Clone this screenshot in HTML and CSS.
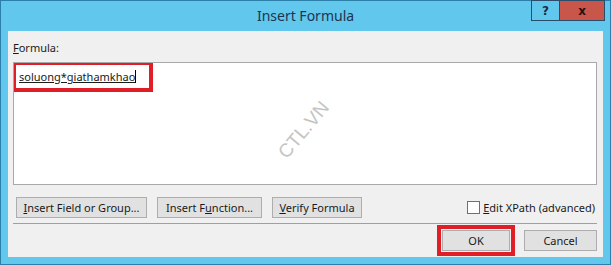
FILE: index.html
```html
<!DOCTYPE html>
<html>

<head>
  <meta charset="UTF-8" />
  <title>Insert Formula</title>
  <link rel="stylesheet" href="styles.css">
</head>

<body>
  <div class="window">
    <div class="titlebar">
      <span class="title">Insert Formula</span>
      <div class="caption-buttons">
        <button class="cap-button help">?</button>
        <button class="cap-button close">x</button>
      </div>
    </div>

    <div class="client">
      <div class="field-label"><u>F</u>ormula:</div>

      <div class="formula-box">
        <div class="formula-mark">
          <span class="formula-text">soluong*giathamkhao</span><span class="caret"></span>
        </div>
        <span class="watermark">CTL.VN</span>
      </div>

      <div class="tool-row">
        <button class="dlg-button field-btn"><u>I</u>nsert Field or Group...</button>
        <button class="dlg-button func-btn">Insert F<u>u</u>nction...</button>
        <button class="dlg-button verify-btn"><u>V</u>erify Formula</button>
        <label class="xpath">
          <span class="checkbox"></span>
          <span><u>E</u>dit XPath (advanced)</span>
        </label>
      </div>

      <hr class="separator">

      <div class="action-row">
        <div class="ok-mark">
          <button class="dlg-button ok">OK</button>
        </div>
        <button class="dlg-button cancel">Cancel</button>
      </div>
    </div>
  </div>
</body>

</html>
```

FILE: styles.css
```css
/* Reset */
* {
  margin: 0;
  padding: 0;
  box-sizing: border-box;
}

body {
  width: 611px;
  height: 265px;
  overflow: hidden;
  font-family: "Noto Sans", "Open Sans", sans-serif;
  font-size: 11px;
  color: #1a1a1a;
}

/* Window frame */
.window {
  display: flex;
  flex-direction: column;
  width: 611px;
  height: 265px;
  background-color: #62c7ec;
  border: 1px solid #2b7fa8;
  padding: 0 7px 7px 7px;
}

.titlebar {
  position: relative;
  height: 30px;
  display: flex;
  justify-content: center;
  align-items: center;
}

.title {
  font-size: 14px;
  color: #1c3550;
  margin-top: -2px;
}

.caption-buttons {
  position: absolute;
  top: -1px;
  right: -2px;
  display: flex;
}

.cap-button {
  height: 21px;
  border: 1px solid #2a4d6b;
  font-family: "DejaVu Sans", sans-serif;
  font-weight: bold;
  font-size: 12px;
  color: #1b2c44;
  cursor: pointer;
}

.cap-button.help {
  width: 28px;
  background-color: #62c7ec;
  border-right: none;
}

.cap-button.close {
  width: 46px;
  background-color: #c9564a;
  color: #2a1010;
}

/* Dialog body */
.client {
  flex: 1;
  display: flex;
  flex-direction: column;
  background-color: #f0f0f0;
  padding: 8px 6px 0 5px;
}

.field-label {
  height: 23px;
  padding-top: 1px;
}

.formula-box {
  position: relative;
  height: 123px;
  background-color: white;
  border: 1px solid #a9a9a9;
  overflow: hidden;
}

.formula-mark {
  position: absolute;
  top: -2px;
  left: -2px;
  width: 141px;
  height: 31px;
  border: 4px solid #e01e27;
  padding: 4px 0 0 3px;
}

.formula-text {
  text-decoration: underline;
}

.caret {
  display: inline-block;
  width: 1px;
  height: 13px;
  background-color: black;
  vertical-align: -2px;
}

.watermark {
  position: absolute;
  left: 256px;
  top: 56px;
  font-family: "Liberation Sans", sans-serif;
  font-size: 19px;
  color: #c4c4c4;
  transform: rotate(-50deg);
}

/* Buttons */
.tool-row {
  display: flex;
  align-items: center;
  gap: 10px;
  margin-top: 12px;
  padding-left: 3px;
}

.dlg-button {
  height: 21px;
  padding: 0 5px;
  background-color: #e1e1e1;
  border: 1px solid #adadad;
  font-family: "Noto Sans", "Open Sans", sans-serif;
  font-size: 11px;
  color: #1a1a1a;
  cursor: pointer;
}

.field-btn {
  width: 131px;
}

.func-btn {
  width: 105px;
}

.verify-btn {
  width: 90px;
}

.xpath {
  margin-left: auto;
  display: flex;
  align-items: center;
  gap: 3px;
  padding-right: 2px;
}

.checkbox {
  width: 13px;
  height: 13px;
  background-color: white;
  border: 1px solid #707070;
}

.separator {
  border: none;
  border-top: 1px solid #a0a0a0;
  margin: 5px 0 0 0;
}

.action-row {
  display: flex;
  justify-content: flex-end;
  align-items: center;
  gap: 9px;
  margin-top: 1px;
}

.ok-mark {
  border: 4px solid #e01e27;
  padding: 1px;
}

.ok {
  width: 68px;
}

.cancel {
  width: 73px;
}
```
